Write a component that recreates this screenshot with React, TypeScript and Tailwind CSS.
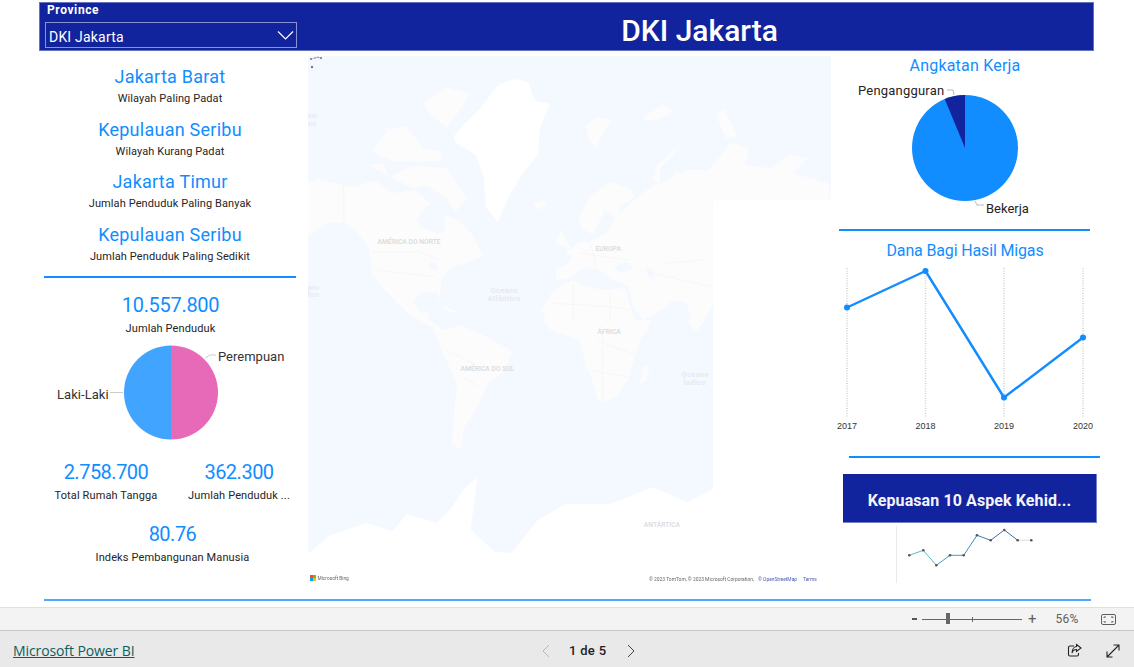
import React from "react";

const font = { fontFamily: "Roboto, 'Liberation Sans', sans-serif" };

function Stat({ title, sub, h = "h-[52.7px]" }: { title: string; sub: string; h?: string }) {
  return (
    <div className={`${h} flex flex-col items-center`}>
      <div className="h-[26px] text-[18px] leading-[26px] tracking-[0.25px] text-[#118DFF]">{title}</div>
      <div className="mt-[1px] h-[16px] text-[11px] leading-[16px] tracking-[0.1px] text-[#252423]">{sub}</div>
    </div>
  );
}

function Kpi({ value, label, className = "" }: { value: string; label: string; className?: string }) {
  return (
    <div className={`flex flex-col items-center ${className}`}>
      <div className="h-[26px] text-[20px] leading-[26px] tracking-[-0.5px] text-[#118DFF]">{value}</div>
      <div className="mt-[3px] h-[16px] text-[11px] leading-[16px] tracking-[0.12px] whitespace-nowrap text-[#252423]">{label}</div>
    </div>
  );
}

function GenderPie() {
  return (
    <svg width="269" height="112" viewBox="39 342 269 112" className="block">
      <path d="M171 345.500a47 47 0 0 0 0 94z" fill="#41A4FF" />
      <path d="M171 345.500a47 47 0 0 1 0 94z" fill="#E66AB8" />
      <path d="M110 392.500h13" stroke="#cccccc" fill="none" />
      <path d="M205 358l5-3h6" stroke="#cccccc" fill="none" />
      <text x="57" y="399" fontSize="13" letterSpacing="0.05" fill="#333">Laki-Laki</text>
      <text x="218" y="361" fontSize="13" letterSpacing="0" fill="#333">Perempuan</text>
    </svg>
  );
}

function LeftColumn() {
  return (
    <div className="flex w-[269px] shrink-0 flex-col items-center">
      <div className="flex w-full flex-col pt-[13px] pl-[5px] pr-[12px]">
        <Stat title="Jakarta Barat" sub="Wilayah Paling Padat" />
        <Stat title="Kepulauan Seribu" sub="Wilayah Kurang Padat" />
        <Stat title="Jakarta Timur" sub="Jumlah Penduduk Paling Banyak" />
        <Stat title="Kepulauan Seribu" sub="Jumlah Penduduk Paling Sedikit" h="h-[54px]" />
      </div>
      <div className="ml-[5px] h-[2px] w-[252px] self-start bg-[#118DFF]" />
      <div className="flex w-full flex-col items-center pt-[14px] pr-[6px]">
        <div className="h-[26px] text-[20px] leading-[26px] tracking-[-0.3px] text-[#118DFF]">10.557.800</div>
        <div className="mt-[3px] h-[16px] text-[11px] leading-[16px] tracking-[0.12px] text-[#252423]">Jumlah Penduduk</div>
      </div>
      <div className="mt-[5px]">
        <GenderPie />
      </div>
      <div className="mt-[5px] flex w-full pl-[3px]">
        <Kpi value="2.758.700" label="Total Rumah Tangga" className="w-[128px]" />
        <Kpi value="362.300" label="Jumlah Penduduk ..." className="w-[138px]" />
      </div>
      <Kpi value="80.76" label="Indeks Pembangunan Manusia" className="mt-[17px] pr-[2px]" />
    </div>
  );
}

const TOP = "translate(305 50) scale(0.338)";
const BOT = "translate(305 320) scale(0.338)";
const CA = "translate(308 170) scale(0.3333)";
const CB = "translate(530 170) scale(0.3333)";
const land = "#FCFCFD";
const ocean = "#F4F8FF";
const border = "#F3F3F3";

function MapArt() {
  return (
    <svg width="523" height="530" viewBox="308 56 523 530" className="block blur-[0.4px]" style={font}>
      <rect x="308" y="56" width="405" height="520" fill={ocean} />
      <rect x="713" y="56" width="118" height="142" fill={ocean} />
      <g transform={TOP} fill={land}>
        <polygon fill="#FFFFFF" points="440,255 470,220 520,170 570,105 620,85 660,95 680,150 725,160 695,230 690,310 640,370 600,440 570,510 535,465 530,380 505,310 445,275" />
        <polygon points="350,160 420,110 490,130 460,175 420,230 370,190" />
        <polygon points="200,300 245,235 300,225 350,290 405,300 400,330 260,330" />
        <polygon points="190,340 230,335 250,375 310,345 360,345 420,350 480,440 445,480 420,440 360,400 320,410" />
        <polygon points="830,222 870,200 908,210 885,240 860,290 840,265" />
        <polygon points="1000,200 1060,160 1090,180 1050,205 1010,210" />
        <polygon points="1215,190 1240,175 1280,255 1245,260" />
        <polygon points="1030,385 1040,340 1105,285 1090,310 1050,350 1050,395" />
        <polygon points="1000,420 1050,405 1100,360 1130,375 1130,430 1190,360 1260,275 1315,290 1300,340 1380,350 1430,310 1490,320 1440,365 1550,395 1555,445 1207,445 1000,445" />
      </g>
      <g transform={CA} fill={land}>
        <polygon points="0,40 30,28 100,45 140,50 200,30 250,70 320,60 370,100 345,120 325,150 345,175 385,190 410,185 410,135 450,150 490,190 525,255 480,280 430,290 400,330 395,390 385,365 345,365 315,395 335,425 360,425 365,450 405,480 370,470 300,430 230,360 190,310 185,240 150,190 110,155 60,160 0,200" />
        <polygon fill={ocean} points="365,270 385,280 388,298 362,296" />
        <polygon points="395,405 430,418 462,430 425,425" />
        <path d="M107 45V150M190 245H330M330 245L400 270M200 300L380 320" fill="none" stroke={border} strokeWidth="2" />
      </g>
      <g transform={CB} fill={land}>
        <polygon points="75,295 110,285 125,260 105,250 150,215 175,215 235,185 250,150 300,100 340,70 380,40 440,30 470,0 548,0 548,410 510,470 490,470 470,400 430,390 395,420 340,450 310,410 295,350 240,325 205,300 175,290 150,300 120,325 80,330" />
        <polygon fill={ocean} points="250,290 290,275 310,295 270,310" />
        <polygon fill={ocean} points="350,290 370,300 375,330 355,320" />
        <polygon points="145,150 180,80 240,35 300,55 315,80 270,110 265,150 225,120 215,140 190,195 155,175" />
        <polygon points="75,220 95,180 120,235 90,225" />
        <polygon points="10,100 45,90 50,105 25,120" />
        <polygon points="35,420 70,360 130,330 170,350 220,360 285,355 310,440 335,465 360,470 310,530 300,600 170,600 150,510 60,480" />
        <path d="M150 250L300 270M180 215L200 290M330 300L540 350M400 280L520 270M130 340V460M240 360V490M70 400L240 410M240 410L300 420" fill="none" stroke={border} strokeWidth="2" />
      </g>
      <g transform={BOT} fill={land}>
        <polygon points="700,0 1025,0 1000,40 975,110 960,170 920,230 870,245 840,150 825,60 740,30" />
        <polygon points="370,0 385,18 410,30 460,15 540,50 615,95 590,150 540,190 510,260 470,320 462,385 435,370 440,290 450,190 400,80" />
        <polygon points="990,190 1000,140 1020,135 1010,180" />
        <polygon points="1135,0 1160,0 1165,35 1145,25" />
        <polygon fill="#FFFFFF" points="0,700 70,640 180,600 260,625 300,575 390,600 430,560 470,500 510,465 490,620 560,685 610,690 690,590 770,545 900,545 1030,495 1130,540 1207,500 1207,800 0,800" />
        <path d="M470 170L520 200M420 90L500 130M860 60L970 100M850 150L960 170M880 40V240" fill="none" stroke={border} strokeWidth="2" />
      </g>
      <g transform={TOP} fill="#DADADA" fontSize="20" textAnchor="middle" style={{ fontWeight: 500 }}>
        <text x="308" y="575">AMÉRICA DO NORTE</text>
        <text x="897" y="596">EUROPA</text>
        <text x="590" y="720" letterSpacing="2" fill="#E4E7EC">Oceano</text>
        <text x="590" y="742" letterSpacing="2" fill="#E4E7EC">Atlântico</text>
        <text x="22" y="200" fill="#E8EAEE">ino</text>
        <text x="20" y="224" fill="#E8EAEE">ico</text>
        <text x="24" y="710" fill="#E8EAEE">ano</text>
        <text x="24" y="732" fill="#E8EAEE">fico</text>
      </g>
      <g transform={BOT} fill="#DADADA" fontSize="20" textAnchor="middle" style={{ fontWeight: 500 }}>
        <text x="900" y="41">ÁFRICA</text>
        <text x="540" y="150">AMÉRICA DO SUL</text>
        <text x="1056" y="611">ANTÁRTICA</text>
        <text x="1155" y="170" letterSpacing="2" fill="#E4E7EC">Oceano</text>
        <text x="1153" y="192" letterSpacing="2" fill="#E4E7EC">Índico</text>
      </g>
      <path d="M311 59L315 58L317 57L320 58L322 59" stroke="#b0b0b0" strokeWidth="0.7" fill="none" />
      <g fill="#777">
        <circle cx="311" cy="59" r="1" />
        <circle cx="315" cy="58" r="0.7" />
        <circle cx="318" cy="57.500" r="0.7" />
        <circle cx="321" cy="58" r="1" />
        <circle cx="312" cy="67" r="1.200" />
      </g>
      <rect x="310" y="575" width="3" height="3" fill="#F25022" />
      <rect x="313" y="575" width="3" height="3" fill="#7FBA00" />
      <rect x="310" y="578" width="3" height="3" fill="#00A4EF" />
      <rect x="313" y="578" width="3" height="3" fill="#FFB900" />
      <text x="317.500" y="580" fontSize="4.800" fill="#666">Microsoft Bing</text>
      <text x="649" y="581" fontSize="4.900" fill="#666">© 2023 TomTom, © 2023 Microsoft Corporation,</text>
      <text x="758" y="581" fontSize="4.900" fill="#4A5BB0" textDecoration="underline">© OpenStreetMap</text>
      <text x="803" y="581" fontSize="4.900" fill="#4A5BB0" textDecoration="underline">Terms</text>
    </svg>
  );
}

function WorkPie() {
  return (
    <svg width="251" height="138" viewBox="839 80 251 138" className="block">
      <circle cx="965" cy="148" r="53" fill="#118DFF" />
      <path d="M965 148V95A53 53 0 0 0 944.700 99Z" fill="#12239E" />
      <path d="M947 90h6l1 5" stroke="#bbbbbb" fill="none" />
      <path d="M975 201l2 4h7" stroke="#bbbbbb" fill="none" />
      <text x="858" y="95" fontSize="13" letterSpacing="0.2" fill="#252423">Pengangguran</text>
      <text x="986" y="213" fontSize="13" letterSpacing="0" fill="#252423">Bekerja</text>
    </svg>
  );
}

function LineChart() {
  const xs = [847, 925.500, 1004, 1083];
  const ys = [307.500, 271, 397.500, 337.500];
  const years = ["2017", "2018", "2019", "2020"];
  return (
    <svg width="264" height="168" viewBox="834 264 264 168" className="block">
      {xs.map((x) => (
        <line key={x} x1={x} x2={x} y1="268" y2="418" stroke="#D0D0D0" strokeWidth="1.500" strokeDasharray="1 1.500" />
      ))}
      <polyline points={xs.map((x, i) => `${x},${ys[i]}`).join(" ")} fill="none" stroke="#118DFF" strokeWidth="2.400" strokeLinejoin="round" />
      {xs.map((x, i) => (
        <circle key={x} cx={x} cy={ys[i]} r="3" fill="#118DFF" />
      ))}
      {xs.map((x, i) => (
        <text key={x} x={x} y="429" fontSize="9" textAnchor="middle" fill="#333" style={{ fontFamily: "'Liberation Sans', sans-serif" }}>
          {years[i]}
        </text>
      ))}
    </svg>
  );
}

function Spark() {
  const pts = [[909.300, 554.300], [923.300, 549.300], [936.300, 564.300], [950, 554.300], [963.700, 554.300], [977, 534.300], [990.700, 539.300], [1004.300, 529], [1017.700, 539.300], [1031.300, 539.300]];
  const colors = ["#41B5B5", "#41B5B5", "#2F8FB0", "#2F8FB0", "#2A80B0", "#2A70A8", "#2560A0", "#2A5AA0", "#D8D8E0"];
  return (
    <svg width="160" height="60" viewBox="890 524 160 60" className="block">
      <line x1="896.500" x2="896.500" y1="525" y2="582" stroke="#EAEAEA" />
      {pts.slice(0, -1).map((p, i) => (
        <line key={i} x1={p[0]} y1={p[1]} x2={pts[i + 1][0]} y2={pts[i + 1][1]} stroke={colors[i]} strokeWidth="0.900" />
      ))}
      {pts.map((p, i) => (
        <circle key={i} cx={p[0]} cy={p[1]} r="1.300" fill="#555" />
      ))}
    </svg>
  );
}

function RightColumn() {
  return (
    <div className="flex min-w-0 flex-1 flex-col items-start">
      <div className="flex h-[27px] w-[268px] items-end justify-center">
        <div className="text-[16px] leading-[24px] tracking-[0.2px] text-[#118DFF]">Angkatan Kerja</div>
      </div>
      <div className="mt-[2px] ml-[8px]">
        <WorkPie />
      </div>
      <div className="mt-[11px] ml-[8px] h-[2px] w-[251px] bg-[#118DFF]" />
      <div className="mt-[8px] flex h-[24px] w-[268px] items-center justify-center text-[16px] tracking-[-0.15px] text-[#118DFF]">Dana Bagi Hasil Migas</div>
      <div className="mt-[1px] ml-[3px]">
        <LineChart />
      </div>
      <div className="mt-[24px] ml-[18px] h-[2px] w-[251px] bg-[#118DFF]" />
      <div className="mt-[16px] ml-[12px] flex h-[49px] w-[254px] items-center justify-center border-r border-b border-[#7480C8] bg-[#12239E] pt-[5px] text-[16px] font-bold tracking-[0.1px] text-[#F4F4FA]">
        Kepuasan 10 Aspek Kehid...
      </div>
      <div className="mt-[2px] ml-[59px]">
        <Spark />
      </div>
    </div>
  );
}

function Header() {
  return (
    <div className="ml-[39px] mt-[2px] flex h-[49px] w-[1055px] shrink-0 border border-[#6673C4] bg-[#12239E] text-white">
      <div className="flex w-[266px] shrink-0 flex-col pl-[5px]">
        <div className="h-[19px] pl-[2px] text-[12px] leading-[15px] font-bold tracking-[0.6px]">Province</div>
        <div className="flex h-[26px] w-[252px] items-center justify-between border border-[#8A94D4] pr-[2px] pl-[3px] text-[14px]">
          <span className="pt-[4px] tracking-[0.2px]">DKI Jakarta</span>
          <svg width="17" height="12" viewBox="0 0 17 12" fill="none" stroke="#fff" strokeWidth="1.200">
            <path d="M1 2.500l7.500 7.500l7.500-7.500" />
          </svg>
        </div>
      </div>
      <div className="flex flex-1 items-center justify-center pt-[7px] text-[30px] font-medium tracking-[0px]">DKI Jakarta</div>
    </div>
  );
}

function ZoomBar() {
  return (
    <div className="flex h-[23px] shrink-0 items-center border-t border-[#E0E0E0] bg-[#F3F3F3] pl-[912px] text-[#605E5C]">
      <div className="h-[2px] w-[5px] bg-[#555]" />
      <div className="relative ml-[5px] h-[1px] w-[100px] bg-[#666]">
        <div className="absolute top-[-6px] left-[24px] h-[11px] w-[4px] bg-[#666]" />
        <div className="absolute top-[-2px] left-[50px] h-[5px] w-[1px] bg-[#666]" />
      </div>
      <div className="ml-[6px] text-[15px] leading-none">+</div>
      <div className="ml-[19px] w-[32px] text-[12px] tracking-[0.2px]">56%</div>
      <svg className="ml-[13px]" width="15" height="11" viewBox="0 0 15 11" fill="none" stroke="#605E5C" strokeWidth="1">
        <rect x="0.500" y="0.500" width="14" height="10" rx="1.500" />
        <path d="M3 4V3h2M12 4V3h-2M3 7v1h2M12 7v1h-2" />
      </svg>
    </div>
  );
}

function Footer() {
  return (
    <div className="flex flex-1 items-center border-t border-[#C8C8C8] bg-[#E9E9E9] pt-[3px]">
      <a className="ml-[13px] w-[120px] text-[14px] tracking-[-0.1px] whitespace-nowrap text-[#0B5F5F] underline" style={{ fontFamily: "'Open Sans', sans-serif" }} href="#">
        Microsoft Power BI
      </a>
      <svg className="ml-[408px]" width="10" height="14" viewBox="0 0 10 14" fill="none" stroke="#B8B8B8" strokeWidth="1">
        <path d="M8 1L2 7l6 6" />
      </svg>
      <div className="ml-[18px] w-[38px] text-[13px] font-medium tracking-[0.3px] whitespace-nowrap text-[#222]">1 de 5</div>
      <svg className="ml-[19px]" width="10" height="14" viewBox="0 0 10 14" fill="none" stroke="#444" strokeWidth="1">
        <path d="M2 1l6 6l-6 6" />
      </svg>
      <svg className="ml-[431px]" width="15" height="15" viewBox="0 0 15 15" fill="none" stroke="#252423" strokeWidth="1.100">
        <path d="M7 3H3a1.500 1.500 0 0 0-1.500 1.500v7A1.500 1.500 0 0 0 3 13h7a1.500 1.500 0 0 0 1.500-1.500V10" />
        <path d="M9.500 1.500L14 5L9.500 8.500V6.500C7 6.500 5.500 8 5 10C5 6.500 7 3.800 9.500 3.500Z" />
      </svg>
      <svg className="ml-[24px]" width="14" height="14" viewBox="0 0 14 14" fill="none" stroke="#252423" strokeWidth="1.100">
        <path d="M1 13L13 1M7.500 1H13V6.500M1 7.500V13H6.500" />
      </svg>
    </div>
  );
}

export default function App() {
  return (
    <div className="flex h-[667px] w-[1134px] flex-col overflow-hidden bg-white" style={font}>
      <div className="flex h-[607px] shrink-0 flex-col">
        <Header />
        <div className="flex h-[548px] shrink-0 pl-[39px]">
          <LeftColumn />
          <div className="pt-[5px]">
            <MapArt />
          </div>
          <RightColumn />
        </div>
        <div className="ml-[44px] h-[2px] w-[1047px] bg-[#4FA8FF]" />
      </div>
      <ZoomBar />
      <Footer />
    </div>
  );
}
